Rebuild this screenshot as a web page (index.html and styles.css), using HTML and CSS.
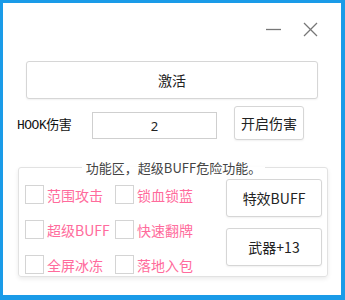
FILE: index.html
```html
<!DOCTYPE html>
<html lang="zh-CN">
<head>
    <meta charset="UTF-8">
    <title>HOOK</title>
    <link rel="stylesheet" href="styles.css">
</head>
<body>
    <div class="window">
        <div class="titlebar">
            <svg class="tb-icon" width="15" height="15" viewBox="0 0 15 15">
                <line x1="0" y1="7.5" x2="15" y2="7.5" stroke="#777" stroke-width="1.3"/>
            </svg>
            <svg class="tb-icon" width="15" height="15" viewBox="0 0 15 15">
                <line x1="1" y1="1" x2="14" y2="14" stroke="#777" stroke-width="1.3"/>
                <line x1="14" y1="1" x2="1" y2="14" stroke="#777" stroke-width="1.3"/>
            </svg>
        </div>

        <button class="btn btn-activate">激活</button>

        <div class="hook-row">
            <label class="hook-label" for="hookValue">HOOK伤害</label>
            <input class="hook-input" id="hookValue" type="text" value="2">
            <button class="btn btn-hook">开启伤害</button>
        </div>

        <fieldset class="group">
            <legend>功能区，超级BUFF危险功能。</legend>
            <div class="checks">
                <label class="check"><input type="checkbox"><span>范围攻击</span></label>
                <label class="check"><input type="checkbox"><span>锁血锁蓝</span></label>
                <label class="check"><input type="checkbox"><span>超级BUFF</span></label>
                <label class="check"><input type="checkbox"><span>快速翻牌</span></label>
                <label class="check"><input type="checkbox"><span>全屏冰冻</span></label>
                <label class="check"><input type="checkbox"><span>落地入包</span></label>
            </div>
            <div class="side-buttons">
                <button class="btn btn-side">特效BUFF</button>
                <button class="btn btn-side">武器+13</button>
            </div>
        </fieldset>
    </div>
</body>
</html>
```

FILE: styles.css
```css
body {
    margin: 0;
    font-family: "Noto Sans CJK SC", "Noto Sans", sans-serif;
    color: #222;
}

.window {
    width: 345px;
    height: 300px;
    box-sizing: border-box;
    border: solid #1a9be8;
    border-width: 3px 4px 5px 3px;
    background-color: #fff;
    overflow: hidden;
}

.titlebar {
    display: flex;
    justify-content: flex-end;
    gap: 22px;
    height: 40px;
    padding: 19px 23px 0 0;
    box-sizing: border-box;
}

.tb-icon {
    display: block;
}

.btn {
    font-family: "Noto Sans CJK SC", "Noto Sans", sans-serif;
    font-size: 14px;
    color: #222;
    background-color: #fff;
    border: 1px solid #d6d6d6;
    border-radius: 3px;
    box-shadow: 0 1px 2px rgba(0, 0, 0, 0.06);
    padding: 0;
    cursor: pointer;
}

.btn-activate {
    display: block;
    width: 292px;
    height: 38px;
    margin: 18px 0 0 23px;
}

.hook-row {
    display: flex;
    align-items: center;
    height: 34px;
    margin-top: 7px;
    padding-left: 14px;
}

.hook-label {
    width: 75px;
    font-family: "Liberation Mono", "Noto Sans CJK SC", monospace;
    font-size: 13px;
    color: #111;
    letter-spacing: -0.5px;
}

.hook-input {
    width: 125px;
    height: 27px;
    box-sizing: border-box;
    margin-top: 5px;
    border: 1px solid #cfcfcf;
    text-align: center;
    font-family: "Noto Sans", sans-serif;
    font-size: 13px;
    color: #222;
    outline: none;
}

.btn-hook {
    width: 70px;
    height: 34px;
    margin-left: 17px;
}

.group {
    display: flex;
    justify-content: space-between;
    width: 310px;
    height: 119px;
    box-sizing: border-box;
    margin: 18px 0 0 15px;
    padding: 2px 5px 0 6px;
    border: 1px solid #e2e2e2;
    border-radius: 3px;
    box-shadow: 0 2px 4px rgba(0, 0, 0, 0.08);
}

.group legend {
    margin: 0 auto;
    padding: 0 4px;
    font-size: 13px;
    color: #444;
}

.checks {
    display: grid;
    grid-template-columns: 90px 90px;
    grid-auto-rows: 35px;
    margin-top: 6px;
}

.check {
    display: flex;
    align-items: center;
    height: 19px;
    font-size: 14px;
    color: #ff6b9c;
}

.check input {
    appearance: none;
    width: 19px;
    height: 19px;
    margin: 0 3px 0 0;
    border: 1px solid #d4d4d4;
    background-color: #fff;
}

.side-buttons {
    display: flex;
    flex-direction: column;
    gap: 11px;
}

.btn-side {
    width: 96px;
    height: 38px;
}
```
